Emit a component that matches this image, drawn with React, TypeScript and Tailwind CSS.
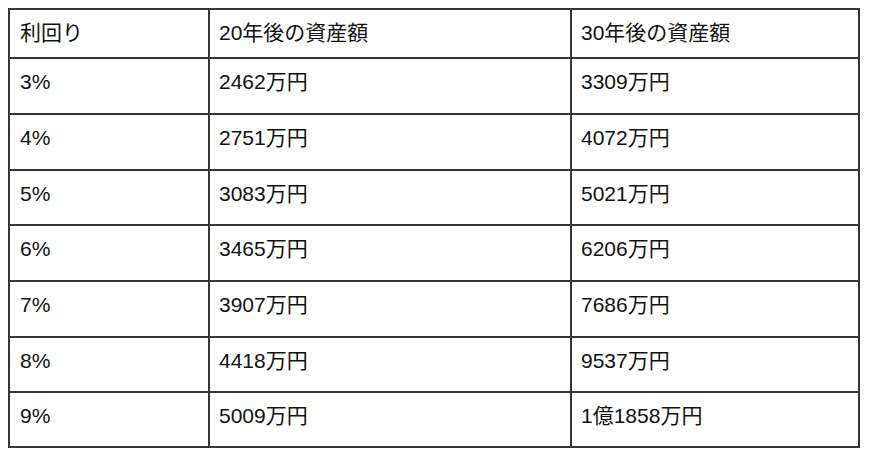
import React from 'react';

const rows: { rate: string; y20: string; y30: string; h: string }[] = [
  { rate: '3%', y20: '2462万円', y30: '3309万円', h: 'h-[56px]' },
  { rate: '4%', y20: '2751万円', y30: '4072万円', h: 'h-[56px]' },
  { rate: '5%', y20: '3083万円', y30: '5021万円', h: 'h-[55px]' },
  { rate: '6%', y20: '3465万円', y30: '6206万円', h: 'h-[56px]' },
  { rate: '7%', y20: '3907万円', y30: '7686万円', h: 'h-[56px]' },
  { rate: '8%', y20: '4418万円', y30: '9537万円', h: 'h-[55px]' },
  { rate: '9%', y20: '5009万円', y30: '1億1858万円', h: 'h-[55px]' },
];

const font = { fontFamily: '"Liberation Sans", "Noto Sans CJK JP", sans-serif' };

export default function App() {
  return (
    <div className="w-[870px] h-[455px] bg-white pt-[8px] pl-[8px]" style={font}>
      <div className="w-[852px] border-2 border-[#353535] text-[21px] leading-[20px] text-[#111]">
        {/* header */}
        <div className="flex h-[47px]">
          <div className="w-[198px] pl-[10px] pt-[13px]">利回り</div>
          <div className="w-[362px] border-l-2 border-[#353535] pl-[9px] pt-[13px]">20年後の資産額</div>
          <div className="w-[288px] border-l-2 border-[#353535] pl-[9px] pt-[13px]">30年後の資産額</div>
        </div>

        {rows.map((r) => (
          <div key={r.rate} className={`flex border-t-2 border-[#353535] ${r.h}`}>
            <div className="w-[198px] pl-[10px] pt-[13px]">{r.rate}</div>
            <div className="w-[362px] border-l-2 border-[#353535] pl-[9px] pt-[13px]">{r.y20}</div>
            <div className="w-[288px] border-l-2 border-[#353535] pl-[9px] pt-[13px]">{r.y30}</div>
          </div>
        ))}
      </div>
    </div>
  );
}
